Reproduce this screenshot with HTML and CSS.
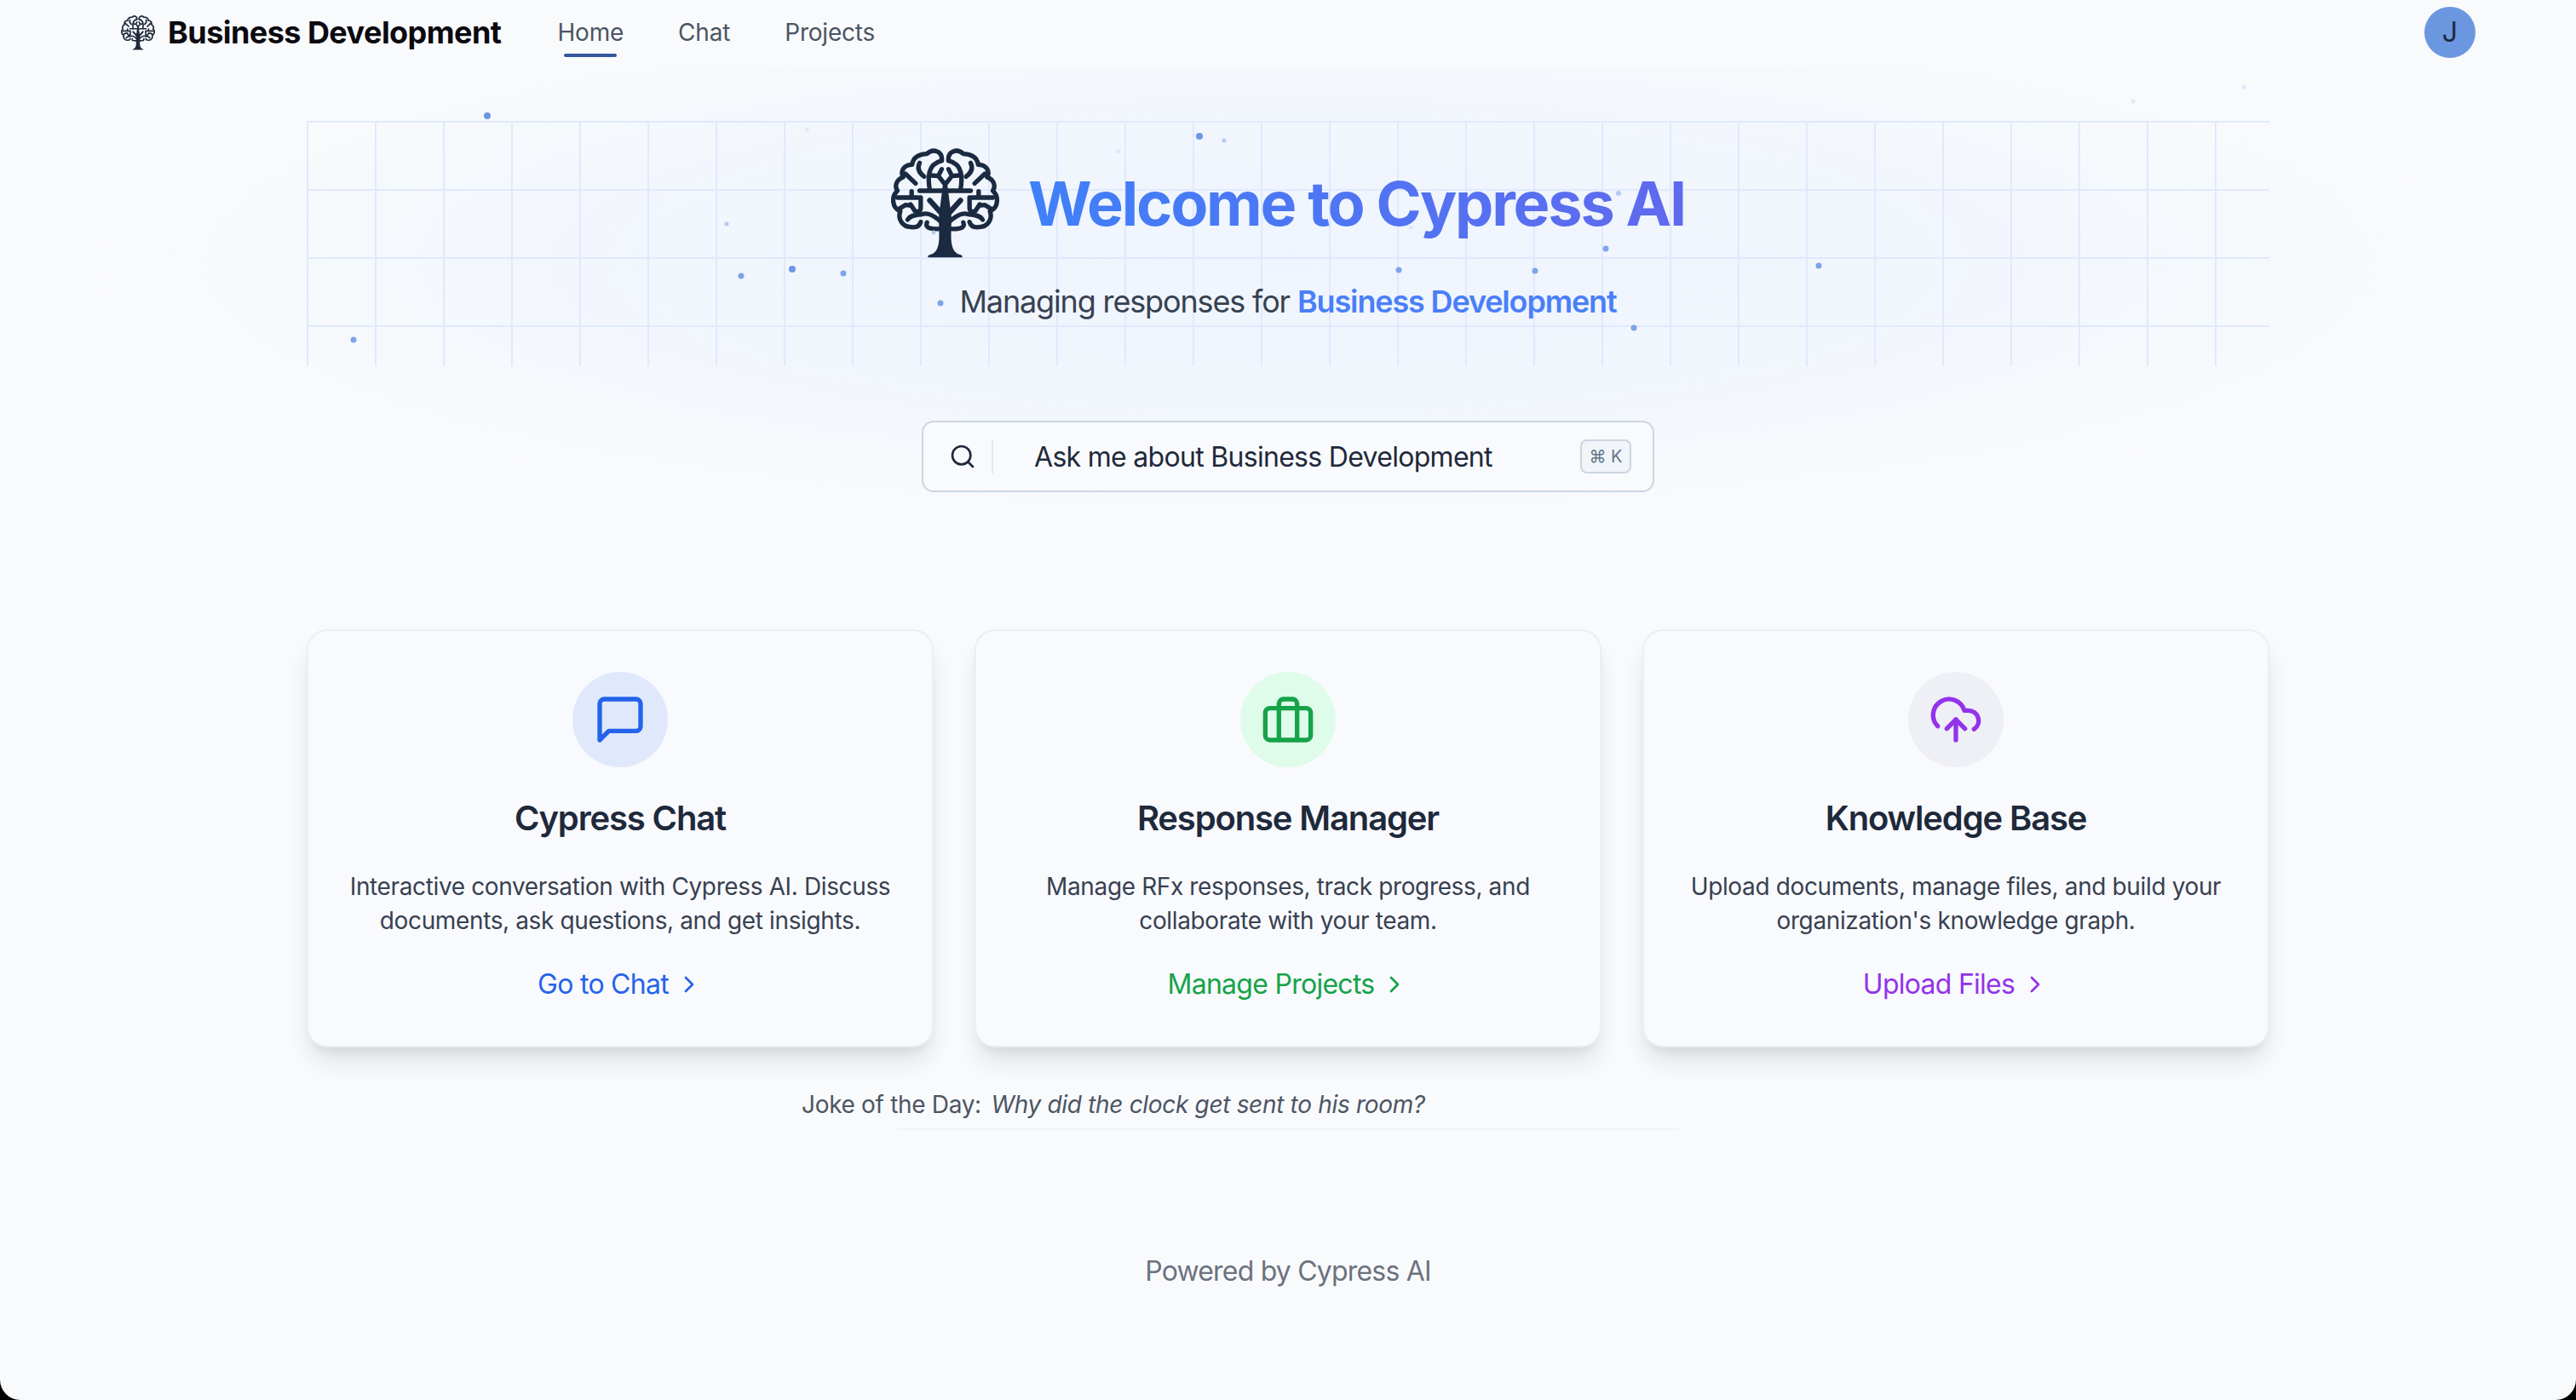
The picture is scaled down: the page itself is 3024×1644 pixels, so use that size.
FILE: index.html
```html
<!DOCTYPE html>
<html lang="en">
<head>
<meta charset="utf-8">
<title>Cypress AI</title>
<link rel="stylesheet" href="styles.css">
</head>
<body>
<svg class="defs" width="0" height="0" aria-hidden="true">
  <defs>
    <g id="half" fill="none" stroke="currentColor" stroke-width="16" stroke-linecap="round" stroke-linejoin="round">
      <path d="M228 84C232 52 198 38 176 60C150 60 126 72 124 98C98 98 80 118 92 142C70 150 60 172 72 190C50 210 52 250 82 262C72 290 90 318 120 318C138 320 150 314 154 300"/>
      <path d="M228 84C205 90 190 105 185 125C180 145 182 165 186 188"/>
      <path d="M150 92C140 112 150 128 166 140"/>
      <path d="M100 130L136 164"/>
      <path d="M150 190H240"/>
      <path d="M72 214H146M122 192V214"/>
      <path d="M240 168L216 138L228 114M216 138L192 136"/>
      <path d="M154 214V250C154 262 146 266 134 262L118 238"/>
      <path d="M78 254L100 240L120 242"/>
      <path d="M186 224L224 266" stroke-width="19"/>
      <path d="M108 292C120 272 146 276 160 272C180 266 205 280 228 302"/>
      <path d="M176 302C168 322 190 326 226 324"/>
    </g>
    <g id="tree">
      <use href="#half"/>
      <use href="#half" transform="matrix(-1 0 0 1 480 0)"/>
      <path fill="currentColor" d="M180 425Q177 417 188 415C212 410 219 382 219 350L218 280L232 170H248L262 280L261 350C261 382 268 410 292 415Q303 417 300 425Z"/>
    </g>
  </defs>
</svg>
<div class="page">
  <header class="topbar">
    <div class="brand">
      <svg class="brand-tree" viewBox="50 40 380 390"><use href="#tree"/></svg>
      <span class="brand-name">Business Development</span>
    </div>
    <nav class="nav">
      <a class="nav-link is-active">Home</a>
      <a class="nav-link">Chat</a>
      <a class="nav-link">Projects</a>
    </nav>
    <div class="avatar">J</div>
  </header>

  <main class="main">
    <section class="hero">
      <div class="hero-title">
        <svg class="hero-tree" viewBox="50 40 380 390"><use href="#tree"/></svg>
        <h1 class="headline">Welcome to Cypress AI</h1>
      </div>
      <p class="subtitle">Managing responses for <strong class="accent">Business Development</strong></p>
      <svg class="dots" viewBox="0 0 3024 1644" aria-hidden="true">
        <g class="dot-strong">
          <circle cx="572" cy="136" r="4"/><circle cx="930" cy="316" r="4"/><circle cx="1408" cy="160" r="4"/>
        </g>
        <g class="dot-mid">
          <circle cx="870" cy="324" r="3.5"/><circle cx="990" cy="321" r="3.5"/><circle cx="415" cy="399" r="3.5"/>
          <circle cx="1642" cy="317" r="3.5"/><circle cx="1802" cy="318" r="3.5"/><circle cx="1104" cy="356" r="3.5"/>
          <circle cx="1918" cy="385" r="3.5"/><circle cx="1885" cy="292" r="3.5"/><circle cx="2135" cy="312" r="3.5"/>
        </g>
        <g class="dot-soft">
          <circle cx="853" cy="263" r="2.5"/><circle cx="1437" cy="165" r="2.5"/><circle cx="1900" cy="227" r="3"/><circle cx="1096" cy="273" r="2.5"/>
        </g>
        <g class="dot-faint">
          <circle cx="947" cy="152" r="2.5"/><circle cx="1313" cy="178" r="2.5"/><circle cx="1656" cy="267" r="2.5"/>
          <circle cx="2504" cy="119" r="2.5"/><circle cx="2634" cy="102" r="2.5"/>
        </g>
      </svg>
    </section>

    <div class="search">
      <svg class="search-icon" viewBox="0 0 24 24"><circle cx="11" cy="11" r="8"/><path d="M21 21l-4.35-4.35"/></svg>
      <span class="search-divider"></span>
      <span class="search-text">Ask me about Business Development</span>
      <kbd class="kbd">⌘ K</kbd>
    </div>

    <section class="cards">
      <article class="card">
        <div class="card-icon tone-blue">
          <svg viewBox="0 0 24 24"><path d="M21 15a2 2 0 0 1-2 2H7l-4 4V5a2 2 0 0 1 2-2h14a2 2 0 0 1 2 2z"/></svg>
        </div>
        <h2 class="card-title">Cypress Chat</h2>
        <p class="card-text">Interactive conversation with Cypress AI. Discuss documents, ask questions, and get insights.</p>
        <a class="card-link link-blue">Go to Chat
          <svg viewBox="0 0 24 24"><path d="M9 18l6-6-6-6"/></svg>
        </a>
      </article>
      <article class="card">
        <div class="card-icon tone-green">
          <svg viewBox="0 0 24 24"><rect x="2" y="7" width="20" height="14" rx="2"/><path d="M16 21V5a2 2 0 0 0-2-2h-4a2 2 0 0 0-2 2v16"/></svg>
        </div>
        <h2 class="card-title">Response Manager</h2>
        <p class="card-text">Manage RFx responses, track progress, and collaborate with your team.</p>
        <a class="card-link link-green">Manage Projects
          <svg viewBox="0 0 24 24"><path d="M9 18l6-6-6-6"/></svg>
        </a>
      </article>
      <article class="card">
        <div class="card-icon tone-purple">
          <svg viewBox="0 0 24 24"><path d="M4 14.9A7 7 0 1 1 15.71 8h1.79a4.5 4.5 0 0 1 2.5 8.24"/><path d="M12 12v9"/><path d="M16 16l-4-4-4 4"/></svg>
        </div>
        <h2 class="card-title">Knowledge Base</h2>
        <p class="card-text">Upload documents, manage files, and build your organization's knowledge graph.</p>
        <a class="card-link link-purple">Upload Files
          <svg viewBox="0 0 24 24"><path d="M9 18l6-6-6-6"/></svg>
        </a>
      </article>
    </section>

    <div class="joke">
      <p class="joke-text">Joke of the Day: <em class="joke-question">Why did the clock get sent to his room?</em></p>
    </div>

    <footer class="footer">Powered by Cypress AI</footer>
  </main>
</div>
</body>
</html>
```

FILE: styles.css
```css
html, body {
  margin: 0;
  padding: 0;
  background: #000;
}
body {
  font-family: Inter, "Liberation Sans", sans-serif;
  color: #1e293b;
}
.defs {
  position: absolute;
}
.page {
  height: 1644px;
  overflow: hidden;
  background:
    radial-gradient(ellipse 47% 50% at 50% 36%, #eff5fe 0%, #f2f6fd 55%, #f6f9fc 80%, #f9fafc 100%) 0 78px / 100% 640px no-repeat,
    #f9fafc;
  border-radius: 0 0 24px 24px;
}

/* top bar */
.topbar {
  height: 76px;
  box-sizing: border-box;
  padding: 0 118px 0 142px;
  display: flex;
  align-items: center;
}
.brand {
  display: flex;
  align-items: center;
  gap: 15px;
}
.brand-tree {
  width: 40px;
  height: 41px;
  color: #1e293b;
}
.brand-name {
  font-size: 36px;
  font-weight: 700;
  color: #0a0a0f;
  letter-spacing: -0.55px;
  white-space: nowrap;
}
.nav {
  display: flex;
  gap: 64px;
  margin-left: 66px;
}
.nav-link {
  position: relative;
  font-size: 28px;
  line-height: 40px;
  color: #4b5563;
  letter-spacing: -0.2px;
}
.nav-link.is-active::after {
  content: "";
  position: absolute;
  left: 8px;
  right: 8px;
  bottom: -9px;
  height: 4px;
  border-radius: 2px;
  background: #34569f;
}
.avatar {
  margin-left: auto;
  width: 60px;
  height: 60px;
  border-radius: 50%;
  background: #6a97e0;
  color: #1e293b;
  font-size: 32px;
  line-height: 60px;
  text-align: center;
}

/* main column */
.main {
  width: 2304px;
  margin: 0 auto;
  padding-top: 66px;
}

/* hero */
.hero {
  position: relative;
  height: 288px;
  box-sizing: border-box;
  padding-top: 32px;
  text-align: center;
  background-image:
    linear-gradient(#e0e9fd 2px, transparent 2px),
    linear-gradient(90deg, #e0e9fd 2px, transparent 2px);
  background-size: 80px 80px;
}
.dots {
  position: absolute;
  left: -360px;
  top: -142px;
  width: 3024px;
  height: 1644px;
  pointer-events: none;
}
.dot-strong { fill: #6c97e6; }
.dot-mid { fill: #7ea4e9; }
.dot-soft { fill: #b3c9f2; }
.dot-faint { fill: #dfe8fa; }
.hero-title {
  display: flex;
  justify-content: center;
  align-items: center;
  gap: 34px;
}
.hero-tree {
  width: 127px;
  height: 130px;
  color: #1a2a40;
}
.headline {
  margin: 0;
  font-size: 72px;
  line-height: 88px;
  font-weight: 700;
  letter-spacing: -2.2px;
  white-space: nowrap;
  background: linear-gradient(90deg, #3f80f8, #6069ee);
  -webkit-background-clip: text;
  background-clip: text;
  color: transparent;
}
.subtitle {
  margin: 24px 0 0;
  font-size: 36px;
  line-height: 52px;
  color: #374151;
  letter-spacing: -1.15px;
}
.accent {
  font-weight: 600;
  color: #4a7ff7;
}

/* search */
.search {
  width: 860px;
  height: 84px;
  box-sizing: border-box;
  margin: 64px auto 0;
  padding: 0 25px 0 30px;
  display: flex;
  align-items: center;
  border: 2px solid #cbd5e1;
  border-radius: 14px;
  background: #f9fafd;
}
.search-icon {
  width: 32px;
  height: 32px;
  fill: none;
  stroke: #1e293b;
  stroke-width: 2;
  stroke-linecap: round;
  stroke-linejoin: round;
}
.search-divider {
  width: 2px;
  height: 40px;
  margin: 0 48px 0 18px;
  background: #e5e7eb;
}
.search-text {
  flex: 1;
  font-size: 32px;
  color: #1e293b;
  letter-spacing: -0.7px;
}
.kbd {
  width: 60px;
  height: 40px;
  box-sizing: border-box;
  display: flex;
  align-items: center;
  justify-content: center;
  border: 2px solid #cbd5e1;
  border-radius: 8px;
  background: #f1f5f9;
  font-family: Inter, "DejaVu Sans", sans-serif;
  font-size: 20px;
  color: #64748b;
}

/* cards */
.cards {
  margin-top: 161px;
  display: grid;
  grid-template-columns: repeat(3, 1fr);
  gap: 48px;
}
.card {
  box-sizing: border-box;
  height: 491px;
  padding: 48px 46px 0;
  display: flex;
  flex-direction: column;
  align-items: center;
  text-align: center;
  border: 2px solid #eceef3;
  border-radius: 24px;
  background: #f9fafd;
  box-shadow: 0 20px 30px -6px rgba(15, 23, 42, 0.12), 0 8px 12px -4px rgba(15, 23, 42, 0.06);
}
.card-icon {
  width: 112px;
  height: 112px;
  border-radius: 50%;
  display: flex;
  align-items: center;
  justify-content: center;
}
.card-icon svg {
  width: 64px;
  height: 64px;
  fill: none;
  stroke: currentColor;
  stroke-width: 2;
  stroke-linecap: round;
  stroke-linejoin: round;
}
.tone-blue { background: #e0e9fb; color: #2563eb; }
.tone-green { background: #dffbea; color: #16a34a; }
.tone-purple { background: #efeff6; color: #9333ea; }
.card-title {
  margin: 32px 0 0;
  font-size: 40px;
  line-height: 56px;
  font-weight: 600;
  color: #1e293b;
  letter-spacing: -1.15px;
}
.card-text {
  margin: 32px 0 0;
  font-size: 28px;
  line-height: 40px;
  color: #374151;
  letter-spacing: -0.37px;
}
.card-link {
  margin-top: 31px;
  display: flex;
  align-items: center;
  gap: 8px;
  font-size: 32px;
  line-height: 48px;
  letter-spacing: -0.73px;
}
.card-link svg {
  width: 32px;
  height: 32px;
  fill: none;
  stroke: currentColor;
  stroke-width: 2;
  stroke-linecap: round;
  stroke-linejoin: round;
}
.link-blue { color: #2563eb; }
.link-green { color: #16a34a; }
.link-purple { color: #9333ea; }

/* joke and footer */
.joke {
  width: 916px;
  margin: 47px auto 0;
  padding-bottom: 8px;
  border-bottom: 2px solid #f1f3f7;
}
.joke-text {
  margin: 0 0 0 -113px;
  font-size: 28px;
  line-height: 40px;
  color: #4b5563;
  white-space: nowrap;
  letter-spacing: -0.32px;
}
.joke-question {
  margin-left: 4px;
}
.footer {
  margin-top: 142px;
  font-size: 32px;
  line-height: 48px;
  text-align: center;
  color: #6b7280;
  letter-spacing: -0.8px;
}
```
